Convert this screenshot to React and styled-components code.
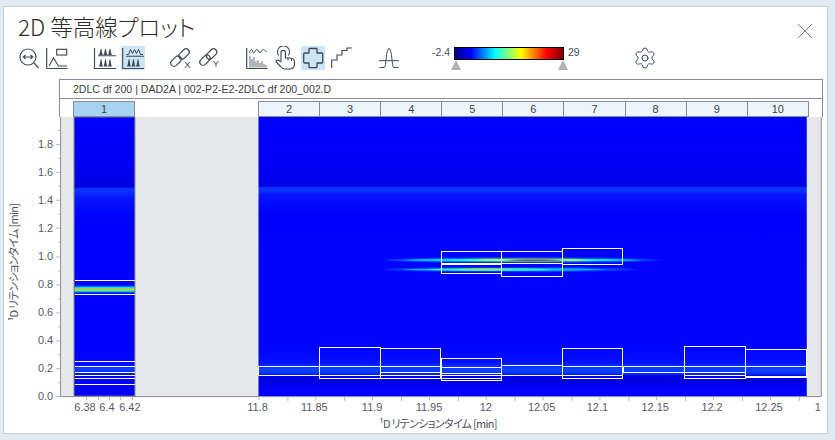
import React from "react";
import styled, { createGlobalStyle } from "styled-components";
import { Settings } from "lucide-react";

const INK = "#3f4a57";
const AXIS = "#8a8a99";

const Global = createGlobalStyle`
  html, body { margin: 0; padding: 0; background: #dfeaf3; }
  body { font-family: "Liberation Sans", Arial, sans-serif; }
`;

const Page = styled.div`
  width: 835px;
  height: 440px;
  padding: 6px 0 0 3px;
  box-sizing: border-box;
  overflow: hidden;
`;

const Dialog = styled.section`
  width: 825px;
  height: 428px;
  box-sizing: border-box;
  background: #fff;
  border: 1px solid #c5cfd6;
  display: flex;
  flex-direction: column;
`;

const Header = styled.header`
  height: 39px;
  display: flex;
  align-items: center;
  justify-content: space-between;
  padding: 0 14px 0 14px;
`;

const Title = styled.h1`
  margin: 0;
  font: 300 22.5px/39px "Noto Sans CJK JP", "Liberation Sans", sans-serif;
  color: #2b2b2b;
  font-feature-settings: "palt";
`;

const Close = styled.button`
  width: 16px;
  height: 16px;
  padding: 0;
  border: 0;
  background: none;
  margin-top: 9px;
  display: flex;
`;

const Toolbar = styled.div`
  height: 24px;
  display: flex;
  gap: 24px;
  padding-left: 13px;
`;

const Group = styled.div`
  display: flex;
  gap: 4px;
`;

const Tool = styled.button`
  width: 24px;
  height: 24px;
  padding: 0;
  border: 0;
  display: flex;
  align-items: center;
  justify-content: center;
  background: ${(p) => (p.$active ? "#cce5f7" : "transparent")};
`;

const Glyph = styled.svg.attrs({ width: 24, height: 24, viewBox: "0 0 24 24" })`
  display: block;
  fill: none;
  stroke: ${INK};
  stroke-width: 1.15;
`;

const Colorbar = styled.div`
  width: 184px;
  height: 24px;
  display: grid;
  grid-template-columns: 29px 110px 1fr;
  grid-template-rows: 14px 10px;
  align-items: center;
  font-size: 10.5px;
  color: #46505c;
`;

const Low = styled.span`
  text-align: right;
  padding-right: 4px;
  position: relative;
  top: -1px;
`;

const High = styled.span`
  padding-left: 4px;
  position: relative;
  top: -1px;
`;

const Ramp = styled.div`
  height: 13px;
  box-sizing: border-box;
  border: 1px solid #000;
  background: linear-gradient(90deg, #00008f 0%, #0000ff 15%, #00ffff 37%, #ffff00 61%, #ff0000 85%, #800000 100%);
`;

const Handles = styled.div`
  grid-column: 2;
  display: flex;
  justify-content: space-between;
  margin: 0 -4px 0 -3px;
  align-self: end;
`;

const Handle = styled.i`
  width: 0;
  height: 0;
  border-left: 5px solid transparent;
  border-right: 5px solid transparent;
  border-bottom: 10px solid #b3b3b3;
`;

const Frame = styled.div`
  margin: 9px 0 0 55px;
  width: 764px;
  box-sizing: border-box;
  border: 1px solid ${AXIS};
  border-bottom: 0;
`;

const Info = styled.div`
  height: 18px;
  padding-left: 13px;
  font-size: 10.56px;
  line-height: 18px;
  color: #3c3c3c;
  border-bottom: 1px solid ${AXIS};
`;

const Tabs = styled.div`
  height: 18px;
  padding: 2px 0 0 13px;
  box-sizing: border-box;
  display: flex;
`;

const Tab = styled.div`
  width: 62.1px;
  height: 16px;
  box-sizing: border-box;
  border: 1px solid ${AXIS};
  margin-left: -1px;
  text-align: center;
  font-size: 11px;
  line-height: 14px;
  color: #444;
  background: ${(p) => (p.$active ? "#a5d3f0" : "#ecf5fc")};
  &:first-child { margin-left: 0; margin-right: 124px; width: 62px; }
`;

const Chart = styled.svg.attrs({ width: 823, height: 317, viewBox: "4 116 823 317" })`
  display: block;
  font-family: "Liberation Sans", Arial, sans-serif;
`;

const TickText = styled.text`
  font-size: 11px;
  fill: #565b69;
  text-anchor: ${(p) => p.$anchor || "middle"};
`;

const AxisTitle = styled.text`
  font-family: "Noto Sans CJK JP", "Liberation Sans", sans-serif;
  font-size: 11px;
  font-feature-settings: "palt";
  letter-spacing: -0.7px;
  fill: #4d5260;
  text-anchor: middle;
`;

const Tiny = styled.text`
  font-family: "Liberation Sans", Arial, sans-serif;
  font-size: 9.5px;
  fill: ${INK};
  stroke: none;
  text-anchor: middle;
`;

const off = (y) => ((y - 116) / 280).toFixed(4);

const rightStops = [
  [116, "#0000ff"], [160, "#0000f8"], [180, "#0000ec"], [185, "#0000e6"], [187, "#0a30ff"], [189, "#0c36ff"],
  [194, "#0614ff"], [212, "#0000ff"], [350, "#0004ff"], [362, "#0010ff"], [367, "#0a34ff"], [370, "#0a44ff"],
  [373, "#0a30ff"], [376, "#0000e4"], [381, "#0000dc"], [386, "#0000f4"], [390, "#0000ff"], [396, "#0000ff"],
];

const colStops = [
  [116, "#0000ff"], [160, "#0000f6"], [180, "#0000e6"], [186, "#0000e0"], [188, "#0a34ff"], [191, "#0a30ff"],
  [198, "#0414ff"], [215, "#0000ff"], [284.5, "#0000ff"], [286, "#0060ff"], [287, "#00e0e8"], [288.2, "#70e060"],
  [289, "#e0c030"], [289.8, "#90e050"], [291, "#00d0f0"], [292, "#0040ff"], [293.5, "#0000ff"], [350, "#0000ff"],
  [364, "#0008ff"], [368, "#0a40ff"], [371, "#0a38ff"], [375, "#0000e0"], [380, "#0000f4"], [396, "#0000ff"],
];

const Stops = ({ list }) => list.map(([y, c], i) => <stop key={i} offset={off(y)} stopColor={c} />);

const triple = (base, h) =>
  [8, 12.5, 17]
    .map((a) => `M${a - 2.4} ${base} C${a - 1} ${base} ${a - 0.8} ${base - h} ${a} ${base - h} C${a + 0.8} ${base - h} ${a + 1} ${base} ${a + 2.4} ${base}Z`)
    .join(" ");

const Icons = {
  zoom: (
    <Glyph>
      <circle cx="11" cy="11" r="8" />
      <path d="M17 17 L21.5 22 M6.5 11 H15.5 M8.5 9 L6.3 11 L8.5 13 M13.5 9 L15.7 11 L13.5 13" />
    </Glyph>
  ),
  peakBox: (
    <Glyph>
      <path d="M1.7 2 V22.5 H22.5 M4 20 L8.5 12 L13.5 20 H22" />
      <rect x="11.7" y="3.3" width="10" height="5.7" />
    </Glyph>
  ),
  solid: (
    <Glyph>
      <path d="M1.5 2 V22.5 H23 M5 9.7 H23" />
      <path d={triple(9, 6.5)} fill={INK} stroke="none" />
      <path d={triple(20.5, 7.5)} fill={INK} stroke="none" />
    </Glyph>
  ),
  mixed: (
    <Glyph>
      <path d="M1.7 2 V22.5 H23 M5 10.2 H23" />
      <path d="M5.5 8.5 H7.5 L9.5 3.5 L11.5 7.5 L13.5 3.5 L15.5 7.5 L17.5 3.5 L19.5 8.5 H22" strokeWidth="1" />
      <path d={triple(20.5, 7.5)} fill={INK} stroke="none" />
    </Glyph>
  ),
  linkX: (
    <Glyph>
      <rect x="1" y="12" width="12" height="6.4" rx="3.2" transform="rotate(-45 7 15.2)" />
      <rect x="9" y="4.8" width="12" height="6.4" rx="3.2" transform="rotate(-45 15 8)" />
      <Tiny x="18.5" y="21.5">X</Tiny>
    </Glyph>
  ),
  linkY: (
    <Glyph>
      <rect x="2" y="11" width="12" height="6.4" rx="3.2" transform="rotate(-45 8 14.2)" />
      <rect x="8.6" y="4.8" width="12" height="6.4" rx="3.2" transform="rotate(-45 14.6 8)" />
      <Tiny x="19" y="20.5">Y</Tiny>
    </Glyph>
  ),
  bars: (
    <Glyph>
      <path d="M1.7 2 V22.5 H22.5" />
      <path d="M4.5 7 C5.5 2.5 7 2.5 8 6 C9 9 10.5 4 11.5 3.5 C13 3 13.5 7 15 6.5 C16.5 6 17 3 18.5 3.5 C20 4 20.5 6.5 22 5" strokeWidth="1" />
      <path d="M5 21.5 V10 M7 21.5 V13 M9 21.5 V11 M11 21.5 V15.5 M13 21.5 V14 M15 21.5 V17 M17 21.5 V15 M19 21.5 V18 M21 21.5 V19" strokeWidth="0.8" />
    </Glyph>
  ),
  hand: (
    <Glyph>
      <path d="M5.8 9.5 A6 6 0 1 1 15.3 9.5" strokeWidth="1.1" />
      <path d="M8 15.5 V6.5 A2.2 2.2 0 0 1 12.4 6.5 V12 H17 Q21.5 12.3 21.5 16 V18 Q21.5 23 16.5 23 H12 Q9.5 23 7.5 20.5 L3.2 16 Q2.5 14 5 14 L8 16" />
      <path d="M15 12 V14.5 M18.5 12.5 V15" strokeWidth="1" />
    </Glyph>
  ),
  plus: (
    <Glyph strokeLinejoin="round">
      <path d="M8.5 2.5 H15.5 Q16 2.5 16 3 V7 H21 Q21.7 7 21.7 8 V16 Q21.7 17 21 17 H16 V21 Q16 21.7 15.5 21.7 H8.5 Q8 21.7 8 21 V17 H3.5 Q2.7 17 2.7 16 V8 Q2.7 7 3.5 7 H8 V3 Q8 2.5 8.5 2.5Z" strokeWidth="1.3" />
    </Glyph>
  ),
  steps: (
    <Glyph>
      <path d="M2.7 22 V14 H8 V9 H13 V4.5 H18 V2 H23" />
    </Glyph>
  ),
  peak: (
    <Glyph>
      <path d="M2.5 21.5 H7.5 C9 21.5 9 2.5 12 2.5 C15 2.5 15 21.5 16.5 21.5 H21.5 M2 14.7 H22" strokeWidth="1" />
    </Glyph>
  ),
};

const col1Lines = [280.5, 294.5, 361.5, 366.5, 372.5, 375.5, 378.5, 384.5];

const boxes = [
  [258.5, 366.5, 61, 9, []],
  [319.5, 347.5, 61, 31, [366.5, 375.5]],
  [380.5, 348.5, 60, 30, [366.5, 372.5, 375.5]],
  [441.5, 358.5, 60, 22, [367.5, 373.5, 375.5, 378.5]],
  [501.5, 365.5, 61, 10, []],
  [562.5, 348.5, 61, 30, [366.5, 375.5]],
  [624.5, 366.5, 61, 6, []],
  [685.5, 346.5, 61, 32, [366.5, 372.5, 375.5]],
  [746.5, 349.5, 61, 28, [366.5, 376.5]],
  [441.5, 250.5, 60, 22, [262.5, 263.5]],
  [501.5, 250.5, 61, 26, [262.5]],
  [562.5, 247.5, 61, 16, []],
];

const yLabels = ["0.0", "0.2", "0.4", "0.6", "0.8", "1.0", "1.2", "1.4", "1.6", "1.8"];
const xLabels = [
  ["6.38", 84], ["6.4", 106], ["6.42", 129], ["11.8", 257], ["11.85", 314], ["11.9", 372], ["11.95", 429],
  ["12", 486], ["12.05", 542], ["12.1", 598], ["12.15", 656], ["12.2", 713], ["12.25", 770], ["1", 819],
];
const yStep = 28.1;

const streakTop = [
  ["#0038ff", 522, 137, 3],
  ["#00b8ff", 522, 118, 1.7],
  ["#30f0b0", 525, 90, 1.3],
  ["#d8e840", 530, 58, 1],
  ["#b05428", 535, 28, 0.9],
];
const streakLow = [
  ["#0038ff", 510, 125, 2.6],
  ["#00b8ff", 505, 100, 1.5],
  ["#40f0a0", 490, 60, 1.1],
  ["#b0e850", 485, 26, 0.8],
];

function Heat() {
  return (
    <>
      <defs>
        <linearGradient id="hr" gradientUnits="userSpaceOnUse" x1="0" y1="116" x2="0" y2="396">
          <Stops list={rightStops} />
        </linearGradient>
        <linearGradient id="hc" gradientUnits="userSpaceOnUse" x1="0" y1="116" x2="0" y2="396">
          <Stops list={colStops} />
        </linearGradient>
        <filter id="soft" x="-10%" y="-200%" width="120%" height="500%">
          <feGaussianBlur stdDeviation="3 0.5" />
        </filter>
      </defs>
      <rect x="60" y="116" width="762" height="280" fill="#e7e8ea" />
      <rect x="73" y="116" width="61" height="280" fill="url(#hc)" stroke="#77777f" strokeWidth="1" />
      <rect x="258" y="116" width="550" height="280" fill="url(#hr)" />
      <g filter="url(#soft)">
        {streakTop.map(([c, cx, rx, ry], i) => (
          <ellipse key={i} cx={cx} cy="259.5" rx={rx} ry={ry} fill={c} />
        ))}
        {streakLow.map(([c, cx, rx, ry], i) => (
          <ellipse key={i} cx={cx} cy="269" rx={rx} ry={ry} fill={c} />
        ))}
      </g>
    </>
  );
}

function Overlays() {
  return (
    <g fill="none" stroke="#fff" strokeWidth="1" shapeRendering="crispEdges">
      {col1Lines.map((y) => (
        <path key={y} d={`M73.5 ${y} H134`} />
      ))}
      {boxes.map(([x, y, w, h, lines], i) => (
        <g key={i}>
          <rect x={x} y={y} width={w} height={h} />
          {lines.map((l) => (
            <path key={l} d={`M${x} ${l} H${x + w}`} />
          ))}
        </g>
      ))}
    </g>
  );
}

function Axes() {
  const yTicks = Array.from({ length: 20 }, (_, i) => i);
  const xMinor = [85, 97, 108, 119, 131];
  const xRight = Array.from({ length: 20 }, (_, i) => 258 + i * 28.5);
  return (
    <>
      <path d="M59.5 116 V396.5 H822.5 M822.5 116 V396.5" fill="none" stroke={AXIS} strokeWidth="1" />
      {yTicks.map((i) => {
        const y = Math.round(396 - (i * yStep) / 2) + 0.5;
        return <path key={i} d={`M${i % 2 ? 57 : 55} ${y} H59`} stroke="#b5b5bd" />;
      })}
      {[...xMinor, ...xRight].map((x, i) => (
        <path key={i} d={`M${Math.round(x) + 0.5} 397 V${x > 200 && i % 2 === 0 ? 401 : 400}`} stroke="#b5b5bd" />
      ))}
      {yLabels.map((t, i) => (
        <TickText key={t} x="52" y={400 - i * yStep} $anchor="end">{t}</TickText>
      ))}
      {xLabels.map(([t, x]) => (
        <TickText key={t + x} x={x} y="411">{t}</TickText>
      ))}
      <AxisTitle x="438" y="428">¹D リテンションタイム [min]</AxisTitle>
      <AxisTitle x="17" y="262" transform="rotate(-90 17 262)">¹D リテンションタイム [min]</AxisTitle>
    </>
  );
}

export default function App() {
  const tabs = ["2", "3", "4", "5", "6", "7", "8", "9", "10"];
  return (
    <Page>
      <Global />
      <Dialog>
        <Header>
          <Title>2D 等高線プロット</Title>
          <Close aria-label="close">
            <svg width="16" height="16" viewBox="0 0 16 16" fill="none" stroke="#7a7a7a" strokeWidth="1">
              <path d="M1 1 L15 15 M15 1 L1 15" />
            </svg>
          </Close>
        </Header>
        <Toolbar>
          <Group><Tool>{Icons.zoom}</Tool><Tool>{Icons.peakBox}</Tool></Group>
          <Group><Tool>{Icons.solid}</Tool><Tool $active>{Icons.mixed}</Tool></Group>
          <Group><Tool>{Icons.linkX}</Tool><Tool>{Icons.linkY}</Tool></Group>
          <Group>
            <Tool>{Icons.bars}</Tool>
            <Tool>{Icons.hand}</Tool>
            <Tool $active>{Icons.plus}</Tool>
            <Tool>{Icons.steps}</Tool>
          </Group>
          <Group><Tool>{Icons.peak}</Tool></Group>
          <Colorbar>
            <Low>-2.4</Low>
            <Ramp />
            <High>29</High>
            <Handles><Handle /><Handle /></Handles>
          </Colorbar>
          <Tool><Settings size={24} strokeWidth={1} color={INK} /></Tool>
        </Toolbar>
        <Frame>
          <Info>2DLC df 200 | DAD2A | 002-P2-E2-2DLC df 200_002.D</Info>
          <Tabs>
            <Tab $active>1</Tab>
            {tabs.map((t) => (
              <Tab key={t}>{t}</Tab>
            ))}
          </Tabs>
        </Frame>
        <Chart>
          <Heat />
          <Overlays />
          <Axes />
        </Chart>
      </Dialog>
    </Page>
  );
}
